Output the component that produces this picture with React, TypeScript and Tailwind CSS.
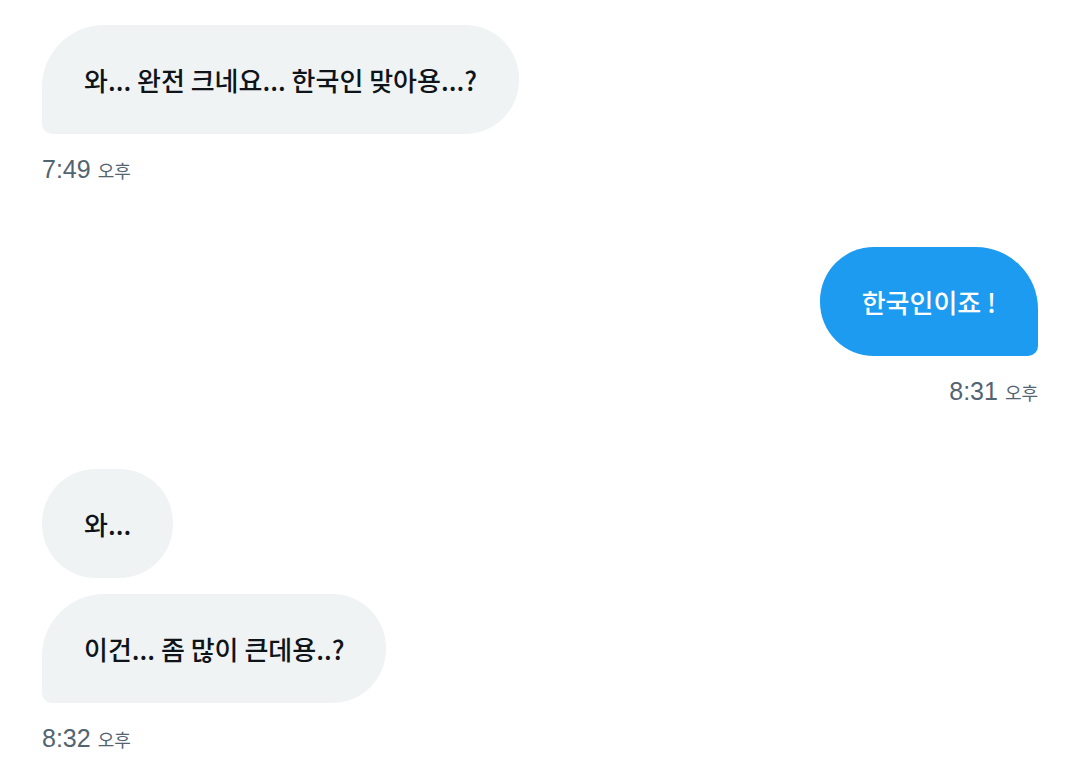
import React from 'react';
import clsx from 'clsx';

interface Message {
  text: string;
  tail: boolean;
}

interface MessageGroup {
  mine: boolean;
  time: string;
  period: string;
  messages: Message[];
}

const GROUPS: MessageGroup[] = [
  {
    mine: false,
    time: '7:49',
    period: '오후',
    messages: [{ text: '와... 완전 크네요... 한국인 맞아용...?', tail: true }],
  },
  {
    mine: true,
    time: '8:31',
    period: '오후',
    messages: [{ text: '한국인이죠 !', tail: true }],
  },
  {
    mine: false,
    time: '8:32',
    period: '오후',
    messages: [
      { text: '와...', tail: false },
      { text: '이건... 좀 많이 큰데용..?', tail: true },
    ],
  },
];

const Bubble: React.FC<{ message: Message; mine: boolean }> = ({ message, mine }) => (
  <p
    className={clsx(
      'max-w-full rounded-[54px] px-[42px] py-[34px] text-[26px] leading-[41px] font-medium',
      mine ? 'bg-[#1d9bf0] text-white' : 'bg-[#eff3f4] text-[#0f1419]',
      message.tail && mine && 'rounded-tr-[62px] rounded-br-[10px]',
      message.tail && !mine && 'rounded-tl-[62px] rounded-bl-[10px]',
    )}
  >
    {message.text}
  </p>
);

const App: React.FC = () => {
  return (
    <main className="flex min-h-screen flex-col gap-[59px] bg-white px-[42px] pt-[25px] font-['Noto_Sans_CJK_KR',sans-serif]">
      {GROUPS.map((group) => (
        <section
          key={group.time}
          className={clsx('flex flex-col gap-4', group.mine ? 'items-end' : 'items-start')}
        >
          {group.messages.map((message) => (
            <Bubble key={message.text} message={message} mine={group.mine} />
          ))}
          <time className="font-['Liberation_Sans','Noto_Sans_CJK_KR',sans-serif] text-[25px] leading-[38px] text-[#536471]">
            {group.time} <span className="text-[18px] leading-none">{group.period}</span>
          </time>
        </section>
      ))}
    </main>
  );
};

export default App;
